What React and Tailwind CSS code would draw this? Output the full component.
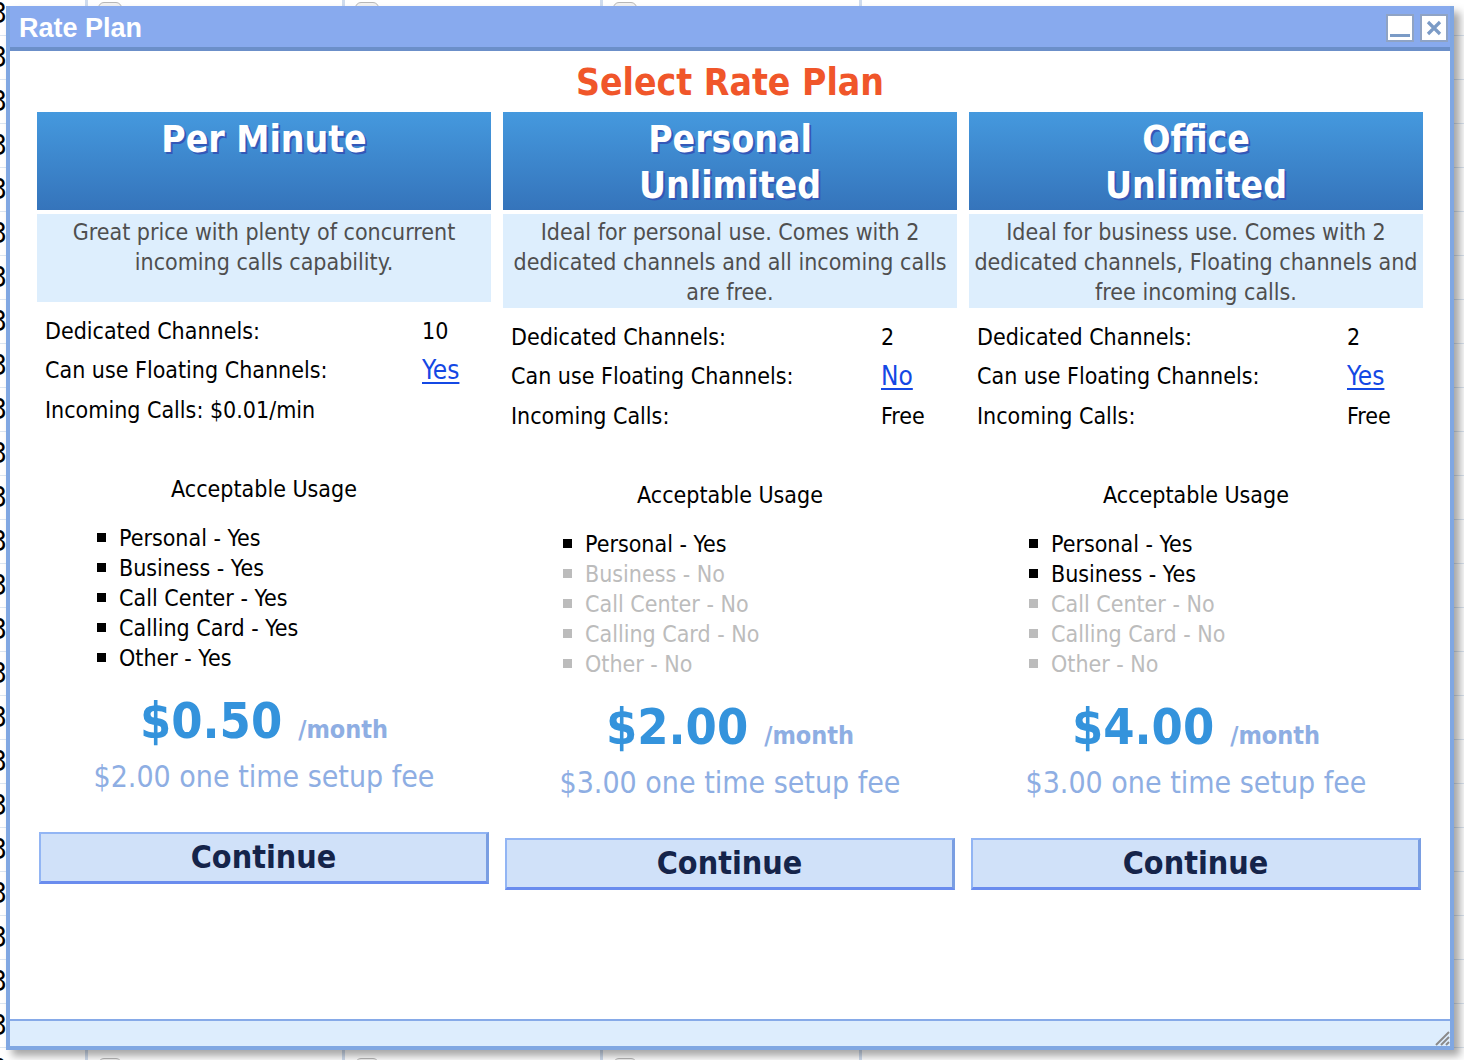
import React from "react";

const plans = [
  {
    name: ["Per Minute"],
    desc: "Great price with plenty of concurrent incoming calls capability.",
    rows: [
      ["Dedicated Channels:", "10"],
      ["Can use Floating Channels:", "Yes", true],
      ["Incoming Calls: $0.01/min", ""],
    ],
    valueCol: "grid-cols-[377px_1fr]",
    usage: [
      ["Personal - Yes", true],
      ["Business - Yes", true],
      ["Call Center - Yes", true],
      ["Calling Card - Yes", true],
      ["Other - Yes", true],
    ],
    price: "$0.50",
    setup: "$2.00",
  },
  {
    name: ["Personal", "Unlimited"],
    desc: "Ideal for personal use. Comes with 2 dedicated channels and all incoming calls are free.",
    rows: [
      ["Dedicated Channels:", "2"],
      ["Can use Floating Channels:", "No", true],
      ["Incoming Calls:", "Free"],
    ],
    valueCol: "grid-cols-[370px_1fr]",
    usage: [
      ["Personal - Yes", true],
      ["Business - No", false],
      ["Call Center - No", false],
      ["Calling Card - No", false],
      ["Other - No", false],
    ],
    price: "$2.00",
    setup: "$3.00",
  },
  {
    name: ["Office", "Unlimited"],
    desc: "Ideal for business use. Comes with 2 dedicated channels, Floating channels and free incoming calls.",
    rows: [
      ["Dedicated Channels:", "2"],
      ["Can use Floating Channels:", "Yes", true],
      ["Incoming Calls:", "Free"],
    ],
    valueCol: "grid-cols-[370px_1fr]",
    usage: [
      ["Personal - Yes", true],
      ["Business - Yes", true],
      ["Call Center - No", false],
      ["Calling Card - No", false],
      ["Other - No", false],
    ],
    price: "$4.00",
    setup: "$3.00",
  },
];

function PlanColumn({ plan }) {
  return (
    <div className="flex flex-col">
      <div className="h-[98px] pt-[5px] bg-gradient-to-b from-[#4599de] to-[#3574bb] text-center text-white font-bold text-[37px] leading-[46px] [text-shadow:2px_2px_0_#3458b8]">
        {plan.name.map((line) => (
          <div key={line}>{line}</div>
        ))}
      </div>
      <div className="mt-[4px] min-h-[88px] bg-[#ddeefd] px-1 pt-[3px] pb-[1px] text-center text-[23px] leading-[30px] text-[#4f4f4f]">
        {plan.desc}
      </div>

      <div className="mt-[9px] pl-[8px] text-[23px] text-black">
        {plan.rows.map(([label, value, link]) => (
          <div key={label} className={`grid ${plan.valueCol} h-[39.5px] items-center`}>
            <span className="whitespace-nowrap">{label}</span>
            {link ? (
              <a href="#" className="text-[26px] text-[#1448e4] underline underline-offset-[3px]">
                {value}
              </a>
            ) : (
              <span>{value}</span>
            )}
          </div>
        ))}
      </div>

      <div className="mt-[44px] text-center text-[23px] leading-[30px] text-black">Acceptable Usage</div>
      <ul className="mt-[19px] pl-[60px] text-[23px] leading-[30px]">
        {plan.usage.map(([text, ok]) => (
          <li key={text} className={`flex items-center ${ok ? "text-black" : "text-[#bcbcbc]"}`}>
            <span className={`w-[9px] h-[9px] mr-[13px] ${ok ? "bg-black" : "bg-[#bcbcbc]"}`} />
            {text}
          </li>
        ))}
      </ul>

      <div className="mt-[20px] flex items-baseline justify-center h-[56px]">
        <span className="font-bold text-[50px] leading-[56px] text-[#3493dc]">{plan.price}</span>
        <span className="ml-[16px] font-bold text-[25px] text-[#8eaee3]">/month</span>
      </div>
      <div className="mt-[8px] text-center text-[30px] leading-[40px] text-[#8eaee3]">
        {plan.setup} one time setup fee
      </div>

      <button className="mt-[35px] mx-[2px] h-[52px] bg-[#d0e1f9] border-t-2 border-l-2 border-t-[#92b5f4] border-l-[#92b5f4] border-r-[3px] border-b-[3px] border-r-[#7a9ee2] border-b-[#6a8cee] text-[32px] font-bold text-[#15244a] leading-none">
        Continue
      </button>
    </div>
  );
}

function BackgroundPage() {
  const rows = Array.from({ length: 26 });
  return (
    <div className="-mt-[52px]">
      {rows.map((_, i) => (
        <div key={i} className="flex h-[44px] border-b border-[#dbe5f1]">
          <div className="w-[88px] border-r-[3px] border-[#cfdcee] overflow-hidden">
            <span className="block -ml-[9px] text-[28px] leading-[44px] text-black">3</span>
          </div>
          <div className="w-[257px] border-r-[3px] border-[#cfdcee] pl-[10px] pt-[10px]">
            <div className="w-[24px] h-[18px] rounded-md border border-[#b8b8b8] bg-[#f2f2f2]" />
          </div>
          <div className="w-[258px] border-r-[3px] border-[#cfdcee] pl-[10px] pt-[10px]">
            <div className="w-[24px] h-[18px] rounded-md border border-[#b8b8b8] bg-[#f2f2f2]" />
          </div>
          <div className="w-[259px] border-r-[3px] border-[#cfdcee] pl-[10px] pt-[10px]">
            <div className="w-[24px] h-[18px] rounded-md border border-[#b8b8b8] bg-[#f2f2f2]" />
          </div>
          <div className="flex-1" />
        </div>
      ))}
    </div>
  );
}

export default function App() {
  return (
    <div className="relative w-[1464px] h-[1060px] overflow-hidden bg-white font-['DejaVu_Sans_Condensed','DejaVu_Sans',sans-serif]">
      <BackgroundPage />

      {/* dialog window */}
      <div className="absolute left-[6px] top-[6px] w-[1448px] h-[1044px] flex flex-col bg-white border-x-4 border-b-4 border-[#80a7e2] shadow-[6px_6px_8px_rgba(0,0,0,0.35)]">
        <div className="h-[41px] shrink-0 flex items-center justify-between bg-[#88aaee] pl-[9px] pr-[2px]">
          <span className="pt-[4px] font-['Liberation_Sans',Arial,sans-serif] font-bold text-[27px] text-white">Rate Plan</span>
          <div className="flex gap-[6px] pt-[2px]">
            <div className="w-[28px] h-[28px] bg-white border-2 border-[#8fa3c4] flex items-end justify-center pb-[3px]">
              <div className="w-[20px] h-[3px] bg-[#7b9bc6]" />
            </div>
            <div className="w-[28px] h-[28px] bg-white border-2 border-[#8fa3c4] flex items-center justify-center">
              <svg width="18" height="18" viewBox="0 0 18 18">
                <path d="M3 3 L15 15 M15 3 L3 15" stroke="#7b9bc6" strokeWidth="3.2" />
              </svg>
            </div>
          </div>
        </div>
        <div className="h-[4px] shrink-0 bg-[#6b8fc9]" />

        <div className="flex-1 pl-[27px] pr-[27px]">
          <div className="h-[61px] flex items-center justify-center pt-[2px] font-bold text-[37px] text-[#f0562a]">
            Select Rate Plan
          </div>
          <div className="grid grid-cols-3 gap-3">
            {plans.map((plan) => (
              <PlanColumn key={plan.name.join(" ")} plan={plan} />
            ))}
          </div>
        </div>

        <div className="h-[27px] shrink-0 flex justify-end items-end border-t-2 border-[#86aae8] bg-[#ddedfd]">
          <svg width="20" height="20" viewBox="0 0 20 20">
            <path d="M19 6 L6 19 M19 11 L11 19 M19 16 L16 19" stroke="#8a8a8a" strokeWidth="2" />
          </svg>
        </div>
      </div>
    </div>
  );
}
